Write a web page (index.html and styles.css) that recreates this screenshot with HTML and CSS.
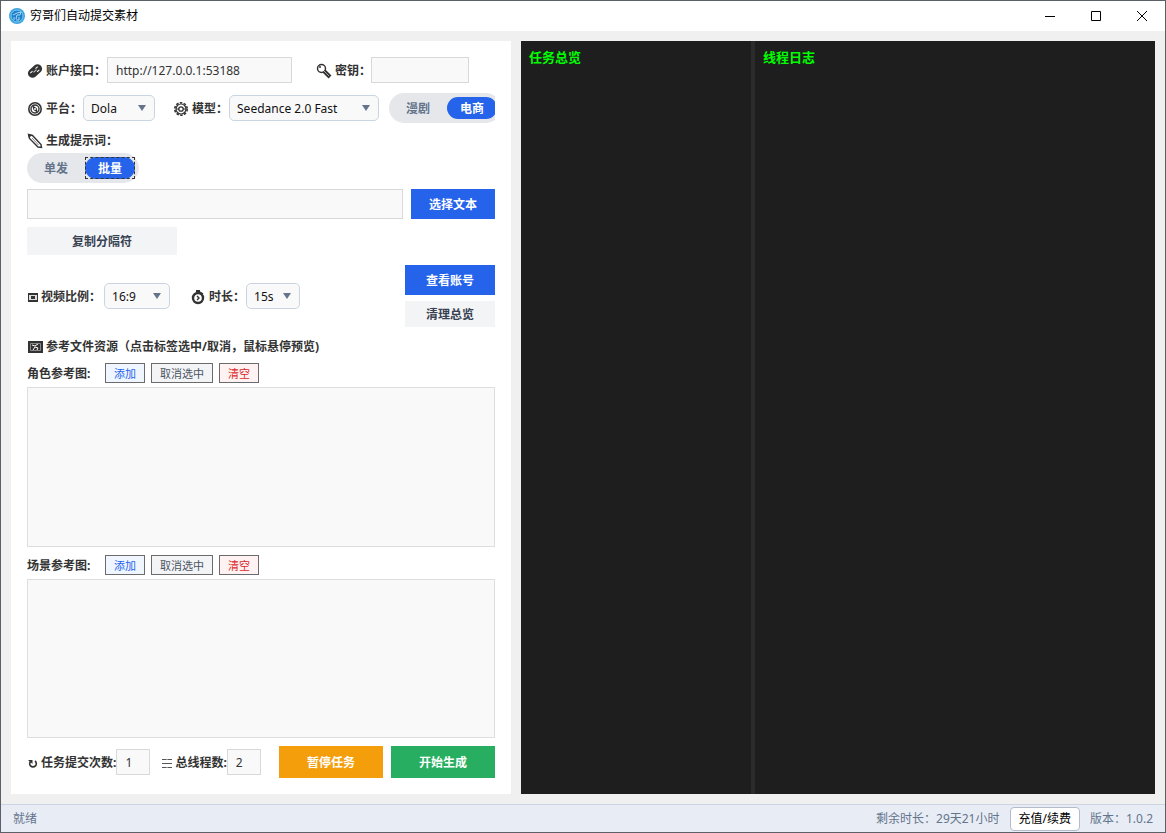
FILE: index.html
```html
<!DOCTYPE html>
<html lang="zh-CN">
<head>
<meta charset="utf-8">
<title>穷哥们自动提交素材</title>
<link rel="stylesheet" href="styles.css">
</head>
<body>

<header class="titlebar">
  <svg class="app-icon" viewBox="0 0 16 16">
    <circle cx="8" cy="8" r="8" fill="#3fa3e0"/>
    <circle cx="8" cy="8" r="6" fill="#1f7fc8" stroke="#7cc8f2" stroke-width="1"/>
    <path d="M4 7l4-2 4-1-1 3H8l-1 4M5 9v3M10 9v3h-3" fill="none" stroke="#a5dcf8" stroke-width="1"/>
  </svg>
  <h1>穷哥们自动提交素材</h1>
  <div class="window-buttons">
    <button type="button" aria-label="最小化"><svg viewBox="0 0 10 10"><path d="M0 5.5h10"/></svg></button>
    <button type="button" aria-label="最大化"><svg viewBox="0 0 10 10"><path d="M.5.5h9v9h-9z"/></svg></button>
    <button type="button" aria-label="关闭"><svg viewBox="0 0 10 10"><path d="M0 0l10 10M10 0L0 10"/></svg></button>
  </div>
</header>

<main>
  <form class="panel">

    <div class="row">
      <label for="api">
        <svg class="icon" viewBox="0 0 16 16">
          <g transform="rotate(-42 8 8)">
            <rect x="0" y="3.5" width="16" height="9" rx="4.5" fill="#333"/>
            <path d="M3 6.5h3M10 6.5h3M9 10h3" stroke="#fff" stroke-width="1"/>
            <path d="M6 8h4" stroke="#ccc" stroke-width="1"/>
          </g>
        </svg>账户接口：</label>
      <input id="api" class="field api" type="text" value="http://127.0.0.1:53188">
      <label for="key">
        <svg class="icon" viewBox="0 0 16 16">
          <circle cx="5.5" cy="5.5" r="4" fill="#fff" stroke="#333" stroke-width="1.5"/>
          <circle cx="4" cy="4" r="1" fill="#333"/>
          <path d="M8 8l6 6" stroke="#333" stroke-width="4"/>
          <path d="M8 8l5 5" stroke="#aaa" stroke-width="1"/>
        </svg>密钥：</label>
      <input id="key" class="field key" type="text">
    </div>

    <div class="row options">
      <label for="platform">
        <svg class="icon" viewBox="0 0 16 16">
          <circle cx="8" cy="8" r="6.200" fill="#fff" stroke="#333" stroke-width="1.600"/>
          <circle cx="8" cy="8" r="4" fill="none" stroke="#333" stroke-width="1.400"/>
          <path d="M5 4l4.500 3 1.500 5-4.500-3z" fill="#333"/>
          <circle cx="8" cy="8" r="1" fill="#fff"/>
        </svg>平台：</label>
      <span class="select platform"><select id="platform"><option>Dola</option></select></span>
      <label for="model">
        <svg class="icon" viewBox="0 0 16 16">
          <circle cx="8" cy="8" r="6.200" fill="none" stroke="#333" stroke-width="1.600" stroke-dasharray="2.500 1.400"/>
          <circle cx="8" cy="8" r="5" fill="#fff" stroke="#333" stroke-width="1.200"/>
          <circle cx="8" cy="8" r="2.200" fill="none" stroke="#333" stroke-width="1.300"/>
          <path d="M3 8h3M10 8h3" stroke="#333"/>
        </svg>模型：</label>
      <span class="select model"><select id="model"><option>Seedance 2.0 Fast</option></select></span>
      <div class="switch">
        <label><input type="radio" name="kind"><span>漫剧</span></label>
        <label><input type="radio" name="kind" checked><span>电商</span></label>
      </div>
    </div>

    <label class="prompt-label" for="prompt">
      <svg class="icon" viewBox="0 0 16 16">
        <path d="M1.500 1.500l4 1 8.500 9 .5 3-3.500-.5-8.500-8.500z" fill="#fff" stroke="#333" stroke-width="1.400"/>
        <path d="M5 5l6.500 7" stroke="#888" stroke-width="1"/>
        <path d="M1 1l4 1-3 3z" fill="#333"/>
      </svg>生成提示词：</label>
    <div class="switch focused">
      <label><input type="radio" name="mode"><span>单发</span></label>
      <label><input type="radio" name="mode" checked><span>批量</span></label>
    </div>

    <div class="row prompt">
      <input id="prompt" class="field" type="text">
      <button type="button" class="btn blue">选择文本</button>
    </div>

    <button type="button" class="btn gray copy">复制分隔符</button>

    <div class="row video">
      <label for="ratio">
        <svg class="icon small" viewBox="0 0 11 11">
          <path d="M1 1h10v9H1z" fill="#333"/>
          <path d="M2 3h8v5H2z" fill="#ddd"/>
          <path d="M4 4h4v3H4z" fill="#333"/>
        </svg>视频比例：</label>
      <span class="select ratio"><select id="ratio"><option>16:9</option></select></span>
      <label for="duration">
        <svg class="icon" viewBox="0 0 16 16">
          <circle cx="8" cy="9" r="5" fill="#fff" stroke="#333" stroke-width="2.400"/>
          <path d="M6 1h4v3H6z" fill="#333"/>
          <path d="M10 3l3 2M7 7l2 2-2 2" fill="none" stroke="#333" stroke-width="1.400"/>
        </svg>时长：</label>
      <span class="select duration"><select id="duration"><option>15s</option></select></span>
      <div class="side-buttons">
        <button type="button" class="btn blue">查看账号</button>
        <button type="button" class="btn gray">清理总览</button>
      </div>
    </div>

    <h2>
      <svg class="icon" viewBox="0 0 16 16">
        <path d="M1 2h15v12H1z" fill="#333"/>
        <path d="M3.500 4.500h10v7h-10z" fill="none" stroke="#888" stroke-width="1"/>
        <path d="M5 6l3 1 3-2M6 11l2-3 3 1-1 2" fill="none" stroke="#fff" stroke-width="1"/>
      </svg>参考文件资源（点击标签选中/取消，鼠标悬停预览)</h2>

    <section class="refs">
      <div class="refs-head">
        <h3>角色参考图:</h3>
        <button type="button" class="tag add">添加</button>
        <button type="button" class="tag">取消选中</button>
        <button type="button" class="tag clear">清空</button>
      </div>
      <div class="refs-box"></div>
    </section>

    <section class="refs">
      <div class="refs-head">
        <h3>场景参考图:</h3>
        <button type="button" class="tag add">添加</button>
        <button type="button" class="tag">取消选中</button>
        <button type="button" class="tag clear">清空</button>
      </div>
      <div class="refs-box"></div>
    </section>

    <div class="row submit">
      <label for="times">
        <svg class="icon small" viewBox="0 0 11 11">
          <path d="M4 3a3.300 3.300 0 1 0 4 0" fill="none" stroke="#333" stroke-width="1.600"/>
          <path d="M1 2h4.500v4z" fill="#333"/>
        </svg>任务提交次数:</label>
      <input id="times" class="field count" type="text" value="1">
      <label for="threads">
        <svg class="icon small" viewBox="0 0 11 11">
          <path d="M1 1.500h10M1 5.500h10M1 9.500h10" stroke="#555" stroke-width="1"/>
          <path d="M6 1v1M6 9v1" stroke="#ccc" stroke-width="1"/>
        </svg>总线程数:</label>
      <input id="threads" class="field count" type="text" value="2">
      <div class="run-buttons">
        <button type="button" class="btn orange">暂停任务</button>
        <button type="button" class="btn green">开始生成</button>
      </div>
    </div>
  </form>

  <div class="logs">
    <section><h2>任务总览</h2></section>
    <section><h2>线程日志</h2></section>
  </div>
</main>

<footer class="statusbar">
  <span>就绪</span>
  <span class="remain">剩余时长：29天21小时</span>
  <button type="button">充值/续费</button>
  <span>版本：1.0.2</span>
</footer>

</body>
</html>
```
FILE: styles.css
```css
* {
  box-sizing: border-box;
}

body {
  display: flex;
  flex-direction: column;
  min-height: 100vh;
  margin: 0;
  border: 1px solid #5b5f68;
  background: #f0f0f0;
  color: #333;
  font: 12px/16px "Noto Sans", "Noto Sans CJK SC", sans-serif;
}

button, input, select {
  margin: 0;
  padding: 0;
  border: 0;
  border-radius: 0;
  font: inherit;
  color: inherit;
}

h1, h2, h3 {
  margin: 0;
  font-size: 12px;
}

/* title bar */

.titlebar {
  display: flex;
  align-items: center;
  height: 30px;
  padding-left: 8px;
  background: #fff;
}

.titlebar h1 {
  margin-left: 5px;
  font-weight: normal;
  color: #000;
}

.app-icon {
  width: 16px;
  height: 16px;
}

.window-buttons {
  display: flex;
  height: 100%;
  margin-left: auto;
}

.window-buttons button {
  width: 46px;
  background: none;
}

.window-buttons svg {
  display: block;
  width: 10px;
  height: 10px;
  margin: 0 auto;
  fill: none;
  stroke: #000;
}

/* main area */

main {
  display: flex;
  flex: 1;
  gap: 10px;
  padding: 10px;
}

.panel {
  display: flex;
  flex: 0 0 500px;
  flex-direction: column;
  padding: 16px;
  background: #fff;
  overflow: hidden;
}

.row {
  display: flex;
  align-items: center;
}

.panel label, .panel h2, .panel h3 {
  font-weight: bold;
  white-space: nowrap;
}

.row > label, .prompt-label, .panel h2 {
  display: flex;
  flex: none;
  align-items: center;
  padding-top: 2px;
}

.icon {
  flex: none;
  width: 16px;
  height: 16px;
  margin-right: 3px;
}

.icon.small {
  width: 11px;
  height: 11px;
}

.field {
  height: 26px;
  padding: 0 8px;
  border: 1px solid #d9d9d9;
  background: #f9f9f9;
}

.api {
  width: 185px;
  margin: 0 24px 0 1px;
}

.key {
  width: 98px;
}

.select {
  position: relative;
  display: flex;
  flex: none;
  height: 26px;
  margin-left: 1px;
  border: 1px solid #cbd5e1;
  border-radius: 5px;
  background: #f9f9f9;
}

.select select {
  width: 100%;
  padding: 2px 7px 0;
  appearance: none;
  background: none;
  color: #111;
}

.select::after {
  content: "";
  position: absolute;
  top: 9px;
  right: 8px;
  border: 4px solid transparent;
  border-top: 6px solid #64748b;
  border-bottom: 0;
  pointer-events: none;
}

.platform {
  width: 72px;
  margin-right: 18px;
}

.model {
  width: 150px;
  margin-right: 10px;
}

.ratio {
  width: 66px;
  margin-left: 3px;
  margin-right: 20px;
}

.duration {
  width: 54px;
}

.options {
  margin: 10px 0 8px;
  overflow: hidden;
}

.switch {
  display: flex;
  flex: none;
  align-self: flex-start;
  gap: 4px;
  height: 30px;
  padding: 4px;
  border-radius: 15px;
  background: #e5e7eb;
}

.switch input {
  position: absolute;
  opacity: 0;
}

.switch span {
  display: block;
  width: 50px;
  height: 22px;
  border-radius: 11px;
  color: #64748b;
  line-height: 24px;
  text-align: center;
}

.switch input:checked + span {
  background: #2563eb;
  color: #fff;
}

.focused input:checked + span {
  position: relative;
}

.focused input:checked + span::after {
  content: "";
  position: absolute;
  inset: 0;
  border: 1px dashed #333;
}

.prompt-label {
  margin-bottom: 4px;
}

.prompt {
  gap: 8px;
  margin: 6px 0 8px;
}

.prompt .field {
  flex: 1;
  height: 30px;
}

.btn {
  height: 30px;
  padding-top: 2px;
  font-weight: bold;
  color: #fff;
}

.prompt .btn {
  width: 84px;
}

.blue {
  background: #2563eb;
}

.gray {
  background: #f3f4f6;
  color: #374151;
}

.orange {
  background: #f59e0b;
}

.green {
  background: #27ae60;
}

.copy {
  width: 150px;
  height: 28px;
}

.video {
  margin: 10px 0;
}

.side-buttons {
  display: flex;
  flex-direction: column;
  gap: 6px;
  width: 90px;
  margin-left: auto;
}

.side-buttons .gray {
  height: 26px;
}

/* reference images */

.refs {
  display: flex;
  flex: 1;
  flex-direction: column;
  margin-top: 8px;
}

.refs-head {
  display: flex;
  align-items: center;
  gap: 6px;
  height: 20px;
  margin-bottom: 4px;
}

.refs-head h3 {
  width: 72px;
  padding-top: 2px;
}

.tag {
  height: 20px;
  padding: 2px 8px 0;
  border: 1px solid #6b6b6b;
  background: #f3f4f6;
  color: #4b5563;
  font-size: 11px;
  line-height: 16px;
}

.add {
  background: #eff6ff;
  color: #2563eb;
}

.clear {
  background: #fef2f2;
  color: #dc2626;
}

.refs-box {
  flex: 1;
  min-height: 100px;
  border: 1px solid #dedede;
  background: #f9f9f9;
}

.submit {
  margin-top: 8px;
}

.count {
  width: 34px;
  margin-right: 11px;
}

.run-buttons {
  display: flex;
  gap: 8px;
  margin-left: auto;
}

.run-buttons .btn {
  width: 104px;
  height: 32px;
}

/* logs */

.logs {
  display: grid;
  flex: 1;
  grid-template-columns: 23fr 40fr;
  gap: 4px;
  background: #2b2b2b;
}

.logs section {
  padding: 8px;
  background: #1e1e1e;
}

.logs h2 {
  color: #0f0;
  font-size: 13px;
  line-height: 16px;
}

/* status bar */

.statusbar {
  display: flex;
  align-items: center;
  gap: 10px;
  height: 28px;
  padding: 0 12px;
  border-top: 1px solid #cbd5e1;
  background: #e8edf5;
  color: #64748b;
}

.remain {
  margin-left: auto;
}

.statusbar button {
  height: 24px;
  padding: 0 8px;
  border: 1px solid #b4bccb;
  border-radius: 4px;
  background: #fff;
  color: #000;
}
```
